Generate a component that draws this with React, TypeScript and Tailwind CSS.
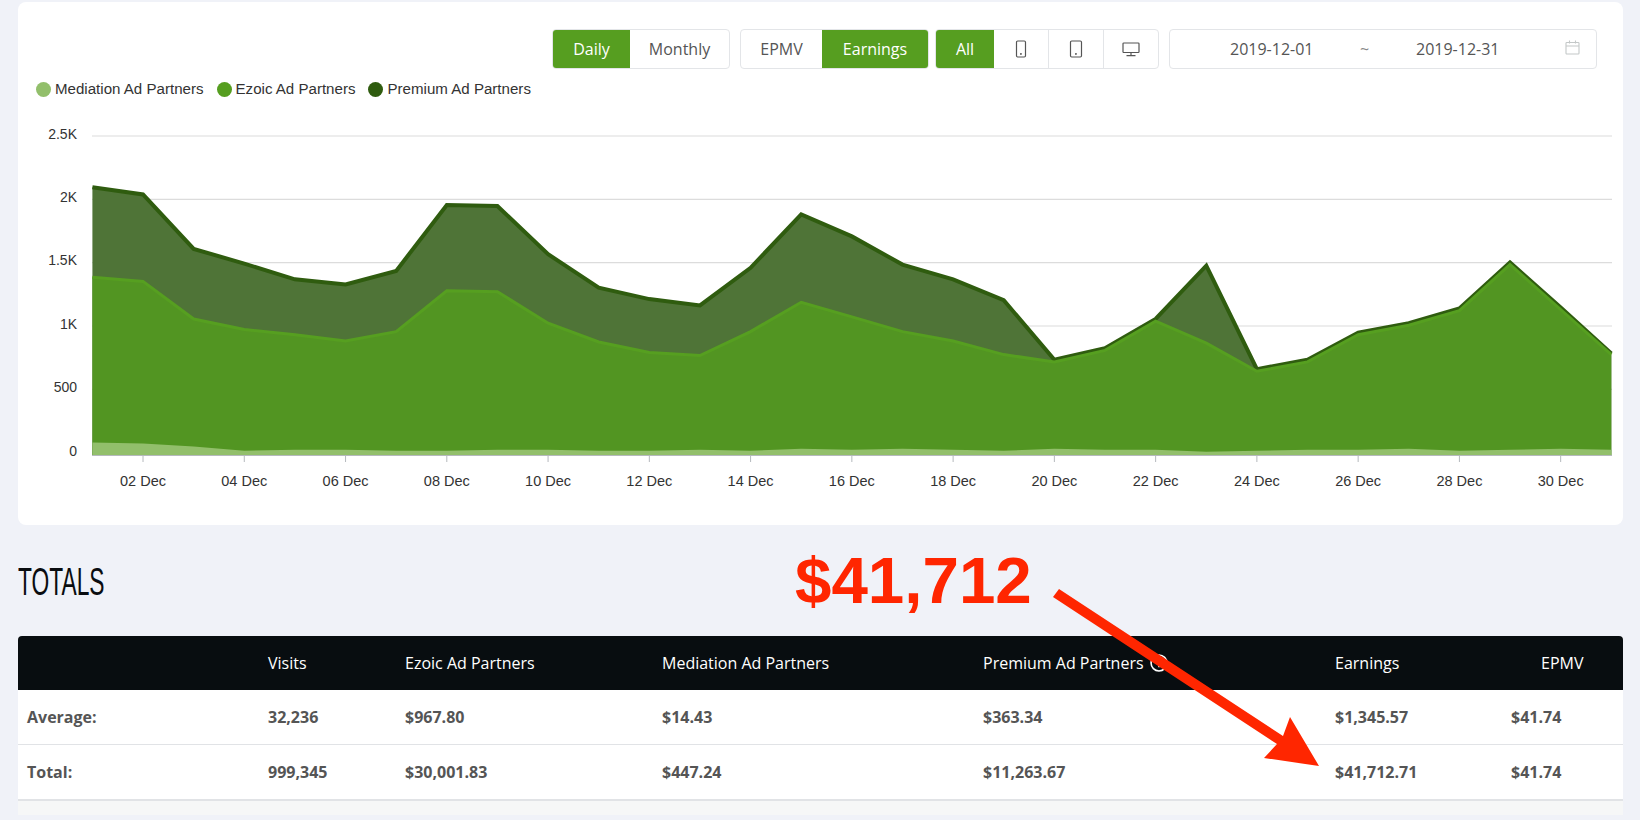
const S = 1640 / 1568;

// series read off the chart, one y value per day
const premium = [178, 185, 237, 251, 266, 271, 258, 195, 196, 242, 274, 285, 291, 255, 204, 225, 252, 266, 286, 343, 332, 304, 253, 352, 343, 317, 308, 294, 250, 293, 337].map((v) => v + 1);
const ezoic = [264, 268, 304, 314, 319, 325, 316, 277, 278, 308, 326, 336, 339, 316, 288, 302, 316, 325, 338, 343, 332, 304, 327, 352, 343, 317, 308, 294, 250, 293, 338]
  .map((v) => v + 1)
  .map((v, i) => (v === premium[i] ? v + 2 : v));
const mediation = [423, 424, 427, 431, 430, 430, 431, 431, 430, 430, 431, 431, 430, 431, 429, 430, 429, 430, 431, 429, 430, 430, 432, 431, 430, 430, 429, 431, 430, 429, 430];

const ORIGIN_X = 18;
const ORIGIN_Y = 108;
const BASE = 455 - ORIGIN_Y;
const dayX = (i: number) => 92.4 + i * 50.63 - ORIGIN_X;
const line = (vals: number[]) => vals.map((v, i) => `${dayX(i).toFixed(1)},${(v * S - ORIGIN_Y).toFixed(1)}`).join(" ");
const area = (vals: number[]) => `${dayX(0)},${BASE} ${line(vals)} ${dayX(30)},${BASE}`;

const grid = [
  { label: "2.5K", y: 136 },
  { label: "2K", y: 199.3 },
  { label: "1.5K", y: 262.6 },
  { label: "1K", y: 326 },
  { label: "500", y: 389.3 },
  { label: "0", y: 453.6 },
];
const ticks = ["02", "04", "06", "08", "10", "12", "14", "16", "18", "20", "22", "24", "26", "28", "30"];

function Chart() {
  return (
    <svg width="1605" height="417" className="block" style={{ fontFamily: '"Liberation Sans", Arial, sans-serif' }}>
      {grid.map((g) => (
        <g key={g.label}>
          {g.label !== "0" && <line x1={74} x2={1594} y1={g.y - ORIGIN_Y} y2={g.y - ORIGIN_Y} stroke="#dcdcdc" strokeWidth="1.2" />}
          <text x={59} y={g.y - ORIGIN_Y + 2.5} textAnchor="end" fontSize="14" fill="#333">
            {g.label}
          </text>
        </g>
      ))}
      <polygon points={area(premium)} fill="#4f7437" />
      <polyline points={line(premium)} fill="none" stroke="#2f5c0f" strokeWidth="4" />
      <polygon points={area(ezoic)} fill="#529522" />
      <polyline points={line(ezoic)} fill="none" stroke="#569f20" strokeWidth="3" />
      <polygon points={area(mediation)} fill="#92bf6b" />
      <line x1={74} x2={1594} y1={BASE + 0.5} y2={BASE + 0.5} stroke="#b5b9bd" strokeWidth="1" />
      {ticks.map((t, i) => {
        const x = dayX(1 + i * 2);
        return (
          <g key={t}>
            <line x1={x} x2={x} y1={BASE} y2={BASE + 7} stroke="#b5b9bd" />
            <text x={x} y={BASE + 31} textAnchor="middle" fontSize="14.5" fill="#333">
              {t} Dec
            </text>
          </g>
        );
      })}
    </svg>
  );
}

function PhoneIcon() {
  return (
    <svg width="12" height="18" viewBox="0 0 12 18" fill="none" stroke="#555" strokeWidth="1.2">
      <rect x="1.5" y="1" width="9" height="16" rx="1.2" />
      <rect x="5.5" y="13.6" width="1" height="1" fill="#555" strokeWidth="0.6" />
    </svg>
  );
}

function TabletIcon() {
  return (
    <svg width="14" height="18" viewBox="0 0 14 18" fill="none" stroke="#555" strokeWidth="1.2">
      <rect x="1.5" y="1" width="11" height="16" rx="1.2" />
      <rect x="6.5" y="13.6" width="1" height="1" fill="#555" strokeWidth="0.6" />
    </svg>
  );
}

function DesktopIcon() {
  return (
    <svg width="18" height="15" viewBox="0 0 18 15" fill="none" stroke="#555" strokeWidth="1.2">
      <rect x="1" y="1" width="16" height="9.5" rx="0.8" />
      <path d="M9 10.5v3M4.5 13.6h9" />
    </svg>
  );
}

function CalendarIcon() {
  return (
    <svg width="15" height="15" viewBox="0 0 15 15" fill="none" stroke="#c4c8c8" strokeWidth="1.1">
      <rect x="1" y="2.5" width="13" height="11.5" rx="0.8" />
      <path d="M1 6h13M4.5 0.5v3M10.5 0.5v3" />
    </svg>
  );
}

function Toolbar() {
  const on = "flex items-center justify-center bg-[#569e20] font-medium text-white";
  const off = "flex items-center justify-center text-[#555]";
  const group = "flex h-[40px] rounded-[4px] border border-[#e3e5e8] overflow-hidden";
  return (
    <div className="flex justify-end gap-[10px] pr-[26px] text-[16px]">
      <div className="flex h-[40px] rounded-[4px] border border-[#e3e5e8] overflow-hidden">
        <div className={`${on} w-[77px]`}>Daily</div>
        <div className={`${off} w-[99px]`}>Monthly</div>
      </div>
      <div className={`${group} mr-[-4px]`}>
        <div className={`${off} w-[81px]`}>EPMV</div>
        <div className={`${on} w-[106px]`}>Earnings</div>
      </div>
      <div className={group}>
        <div className={`${on} w-[58px]`}>All</div>
        <div className={`${off} w-[55px] border-r border-[#e3e5e8]`}>
          <PhoneIcon />
        </div>
        <div className={`${off} w-[55px] border-r border-[#e3e5e8]`}>
          <TabletIcon />
        </div>
        <div className={`${off} w-[54px]`}>
          <DesktopIcon />
        </div>
      </div>
      <div className="flex h-[40px] w-[428px] items-center rounded-[4px] border border-[#e3e5e8] text-[#555]">
        <span className="ml-[60px] w-[84px]">2019-12-01</span>
        <span className="ml-[46px] w-[10px] text-[#888]">~</span>
        <span className="ml-[46px] w-[84px]">2019-12-31</span>
        <span className="ml-[65px] mb-[4px]">
          <CalendarIcon />
        </span>
      </div>
    </div>
  );
}

function Legend() {
  const items = [
    { name: "Mediation Ad Partners", color: "bg-[#92bf6b]" },
    { name: "Ezoic Ad Partners", color: "bg-[#569e20]" },
    { name: "Premium Ad Partners", color: "bg-[#2f5c0f]" },
  ];
  return (
    <div className="mb-[4px] mt-[6px] flex h-[29px] items-center gap-[13px] pl-[18px] font-['Liberation_Sans',Arial,sans-serif] text-[15.1px] text-[#333]">
      {items.map((it) => (
        <div key={it.name} className="flex items-center gap-[4px]">
          <span className={`h-[15px] w-[15px] rounded-full ${it.color}`} />
          <span>{it.name}</span>
        </div>
      ))}
    </div>
  );
}

const COLS = "grid grid-cols-[241px_137px_257px_321px_352px_176px_1fr] items-center pl-[9px]";

function Totals() {
  const rows = [
    ["Average:", "32,236", "$967.80", "$14.43", "$363.34", "$1,345.57", "$41.74"],
    ["Total:", "999,345", "$30,001.83", "$447.24", "$11,263.67", "$41,712.71", "$41.74"],
  ];
  return (
    <div className="mt-[31px] rounded-t-[4px] bg-[#f6f7f7] pb-[14px]">
      <div className={`${COLS} h-[54px] rounded-t-[4px] bg-[#080d10] text-[16px] font-medium text-white`}>
        <div />
        <div>Visits</div>
        <div>Ezoic Ad Partners</div>
        <div>Mediation Ad Partners</div>
        <div className="flex items-center gap-[6px]">
          Premium Ad Partners
          <svg width="18" height="18" viewBox="0 0 17 17" fill="none" stroke="white" strokeWidth="1.5">
            <circle cx="8.5" cy="8.5" r="7.5" />
            <path d="M8.5 7.5v5M8.5 4.5v1.5" />
          </svg>
        </div>
        <div>Earnings</div>
        <div className="pl-[30px]">EPMV</div>
      </div>
      <div className={`${COLS} h-[55px] border-b border-[#e1e3e6] bg-white text-[16px] font-bold text-[#555]`}>
        {rows[0].map((c, i) => (
          <div key={i}>{c}</div>
        ))}
      </div>
      <div className={`${COLS} h-[56px] border-b-2 border-[#e1e3e6] bg-white text-[16px] font-bold text-[#555]`}>
        {rows[1].map((c, i) => (
          <div key={i}>{c}</div>
        ))}
      </div>
    </div>
  );
}

export default function App() {
  return (
    <div className="relative h-[820px] w-[1640px] overflow-hidden bg-[#f0f2f8] pl-[18px] pr-[17px] pt-[2px] font-['Open_Sans',sans-serif]">
      <div className="h-[523px] rounded-[8px] bg-white pt-[27px]">
        <Toolbar />
        <Legend />
        <Chart />
      </div>
      <h2 className="mt-[34px] h-[46px] origin-left scale-x-[0.6] font-['Liberation_Sans_Narrow','Liberation_Sans',sans-serif] text-[38px] leading-[46px] text-[#0a0d10]">
        TOTALS
      </h2>
      <Totals />
      <div className="absolute left-[795px] top-[537px] font-['Liberation_Sans',Arial,sans-serif] text-[65.5px] font-bold leading-[88px] text-[#ff2600]">
        $41,712
      </div>
      <svg className="absolute left-0 top-0" width="1640" height="820">
        <polygon points="1053,597 1059,589 1283,736 1290,717 1319,766 1264,758 1277,744" fill="#ff2600" />
      </svg>
    </div>
  );
}
